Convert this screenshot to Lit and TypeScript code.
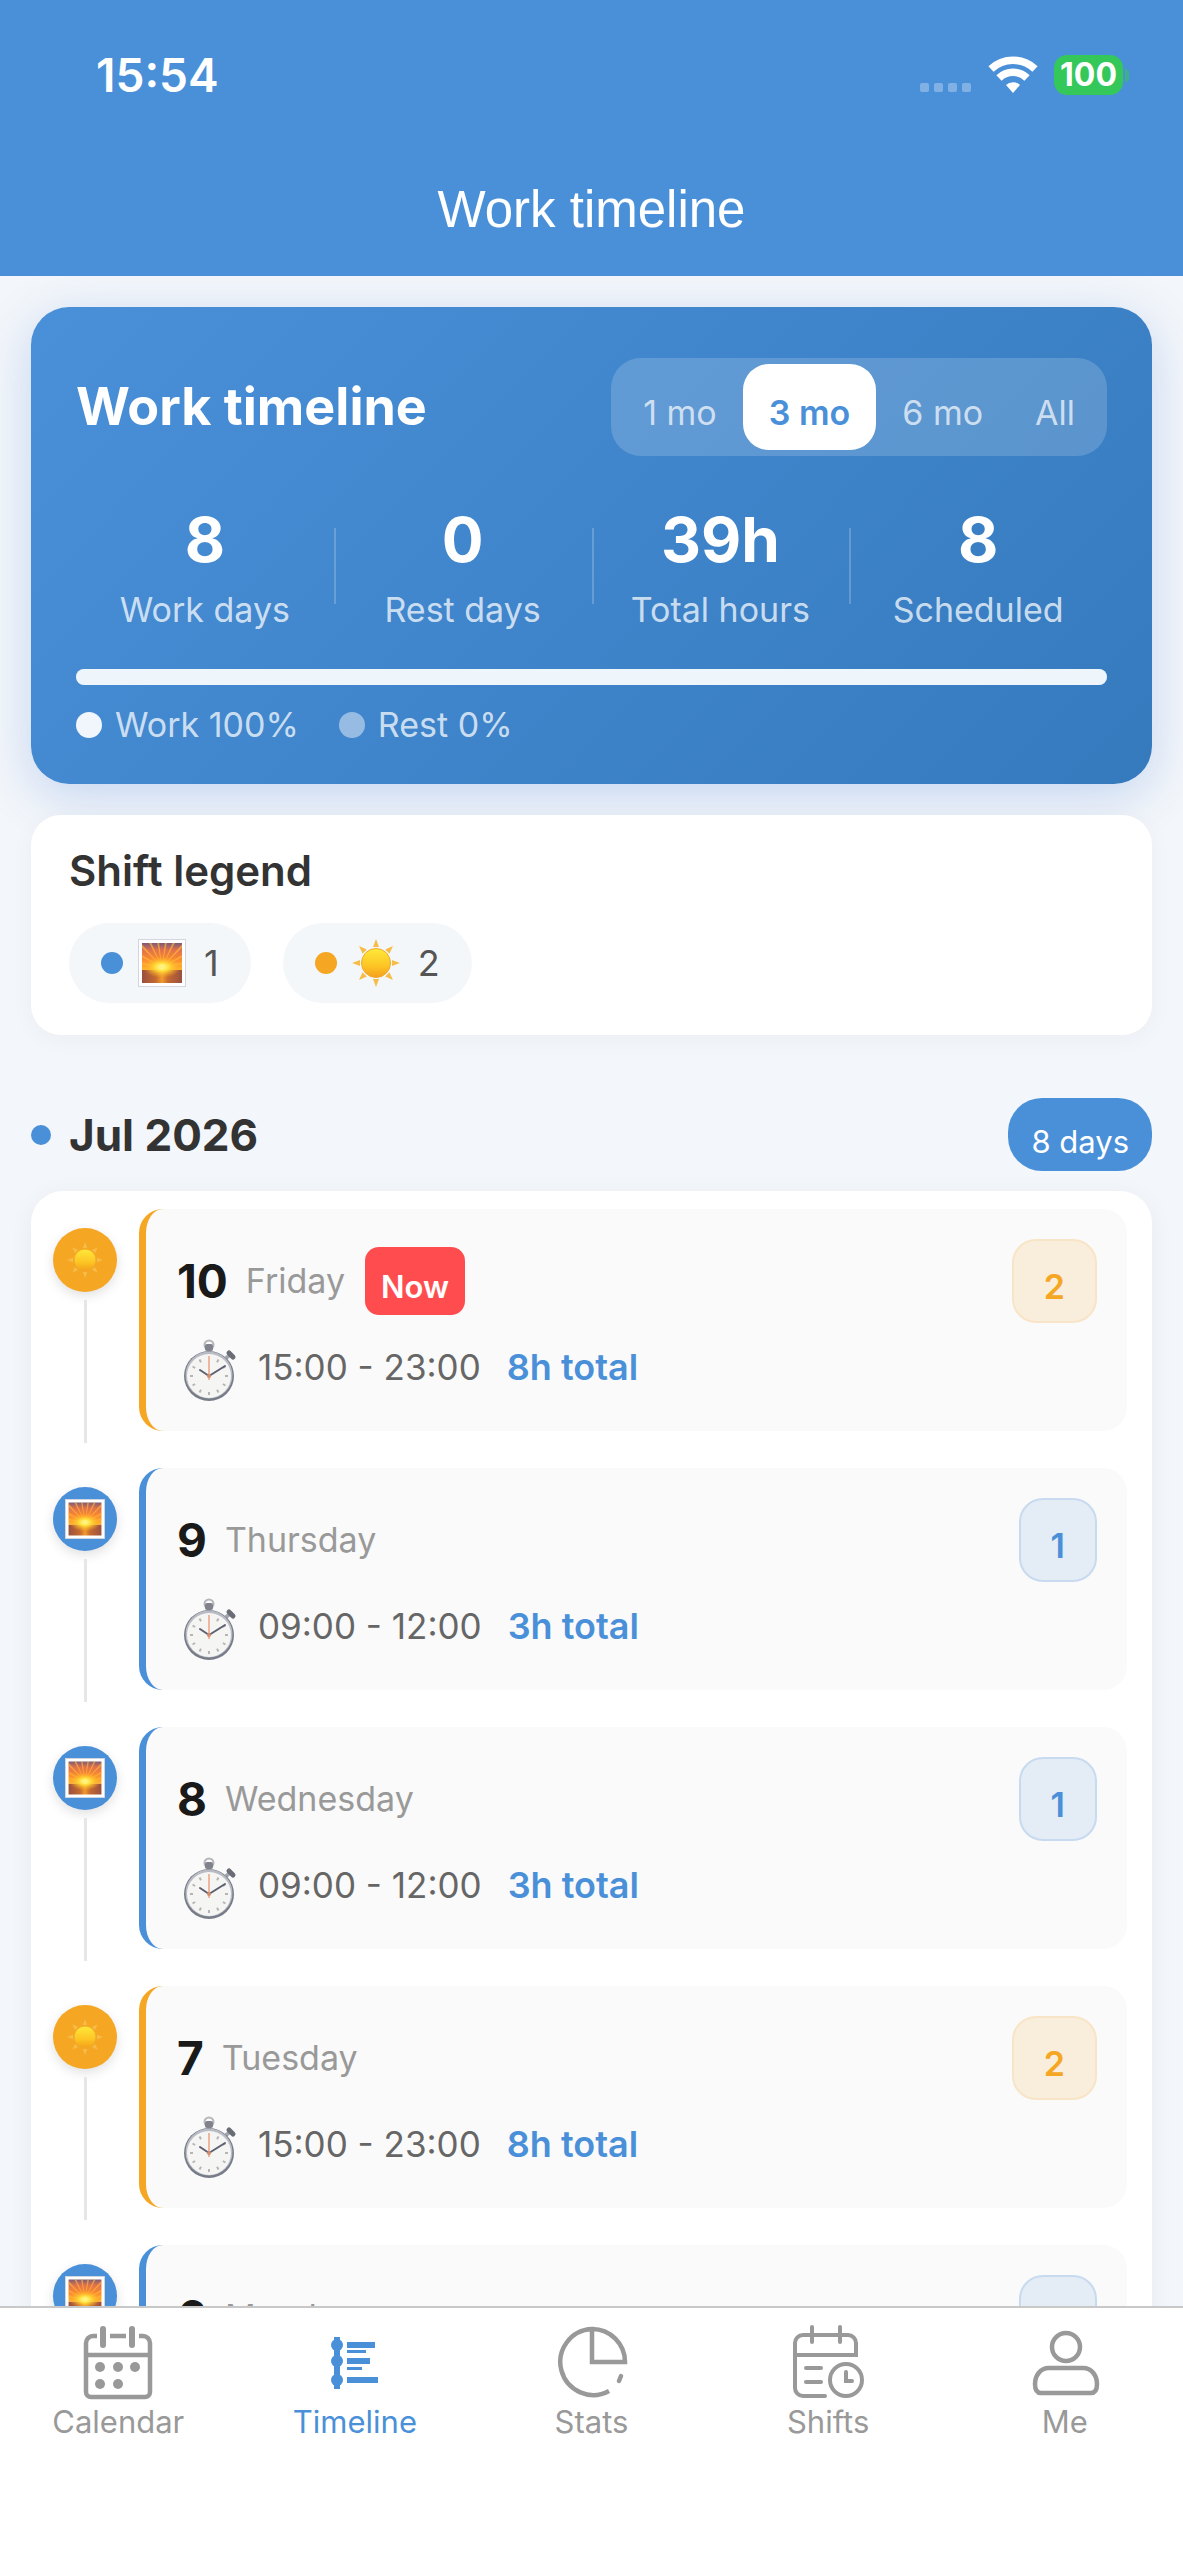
import { LitElement, html, css, svg } from 'lit';
import { customElement, property, state } from 'lit/decorators.js';
import { classMap } from 'lit/directives/class-map.js';

type Shift = 'morning' | 'day';

interface Entry {
  day: number;
  weekday: string;
  shift: Shift;
  hours: string;
  total: string;
  now?: boolean;
}

const SHIFT_NAMES: Record<Shift, string> = { morning: '1', day: '2' };

const ENTRIES: Entry[] = [
  { day: 10, weekday: 'Friday', shift: 'day', hours: '15:00 - 23:00', total: '8h total', now: true },
  { day: 9, weekday: 'Thursday', shift: 'morning', hours: '09:00 - 12:00', total: '3h total' },
  { day: 8, weekday: 'Wednesday', shift: 'morning', hours: '09:00 - 12:00', total: '3h total' },
  { day: 7, weekday: 'Tuesday', shift: 'day', hours: '15:00 - 23:00', total: '8h total' },
  { day: 6, weekday: 'Monday', shift: 'morning', hours: '09:00 - 12:00', total: '3h total' },
];

@customElement('shift-icon')
export class ShiftIcon extends LitElement {
  static override styles = css`
    :host {
      display: block;
      width: 48px;
      height: 48px;
    }

    svg {
      display: block;
      width: 100%;
      height: 100%;
    }
  `;

  @property() shift: Shift = 'day';

  private renderSunrise() {
    const rays = [-80, -62, -44, -26, -9, 9, 26, 44, 62, 80];
    return html`
      <svg viewBox="0 0 48 48" aria-hidden="true">
        <defs>
          <linearGradient id="sky" x1="0" y1="0" x2="0" y2="1">
            <stop offset="0" stop-color="#7a5a78"></stop>
            <stop offset="0.25" stop-color="#e0704c"></stop>
            <stop offset="0.6" stop-color="#fb8a30"></stop>
            <stop offset="1" stop-color="#ffb52b"></stop>
          </linearGradient>
          <linearGradient id="sea" x1="0" y1="0" x2="1" y2="0">
            <stop offset="0" stop-color="#9a5040"></stop>
            <stop offset="0.35" stop-color="#c46a30"></stop>
            <stop offset="0.5" stop-color="#f39a2c"></stop>
            <stop offset="0.65" stop-color="#c46a30"></stop>
            <stop offset="1" stop-color="#9a5040"></stop>
          </linearGradient>
          <radialGradient id="glow">
            <stop offset="0" stop-color="#fffbb0"></stop>
            <stop offset="0.35" stop-color="#ffe03c"></stop>
            <stop offset="1" stop-color="#ffa51e" stop-opacity="0"></stop>
          </radialGradient>
          <clipPath id="frame"><rect x="4" y="4" width="40" height="40"></rect></clipPath>
        </defs>
        <rect x="0.5" y="0.5" width="47" height="47" fill="#fff" stroke="#d3d6de"></rect>
        <g clip-path="url(#frame)">
          <rect x="4" y="4" width="40" height="27" fill="url(#sky)"></rect>
          ${rays.map((angle) => svg`
            <path d="M24 28 L22.6 -8 L25.4 -8 Z" fill="#ffc43a" opacity="0.6" transform="rotate(${angle} 24 28)"></path>
          `)}
          <rect x="4" y="31" width="40" height="13" fill="url(#sea)"></rect>
          <ellipse cx="24" cy="28" rx="19" ry="11" fill="url(#glow)"></ellipse>
          <circle cx="24" cy="28" r="3" fill="#fff27a"></circle>
        </g>
      </svg>
    `;
  }

  private renderSun() {
    const rays = [0, 45, 90, 135, 180, 225, 270, 315];
    return html`
      <svg viewBox="0 0 48 48" aria-hidden="true">
        <defs>
          <linearGradient id="disc" x1="0" y1="0" x2="0" y2="1">
            <stop offset="0" stop-color="#ffe93a"></stop>
            <stop offset="0.6" stop-color="#fdc524"></stop>
            <stop offset="1" stop-color="#f3a01c"></stop>
          </linearGradient>
        </defs>
        ${rays.map((angle) => svg`
          <path d="M24 0 L27 8 L21 8 Z" fill="#f6bc48" transform="rotate(${angle} 24 24)"></path>
        `)}
        <circle cx="24" cy="24" r="14.5" fill="url(#disc)" stroke="#f0a92c"></circle>
      </svg>
    `;
  }

  override render() {
    return this.shift === 'morning' ? this.renderSunrise() : this.renderSun();
  }
}

@customElement('timeline-entry')
export class TimelineEntry extends LitElement {
  static override styles = css`
    :host {
      display: grid;
      grid-template-columns: 64px 1fr;
      gap: 22px;
      font-size: 34px;
      line-height: 48px;
      --accent: #f5a623;
      --badge: #f9eedc;
      --badge-line: #f8e4c6;
    }

    :host([shift='morning']) {
      --accent: #4a90d9;
      --badge: #e4ecf6;
      --badge-line: #c8daef;
    }

    .rail {
      display: flex;
      flex-direction: column;
      align-items: center;
      gap: 8px;
      padding-top: 19px;
      margin-bottom: -12px;
    }

    .node {
      display: flex;
      align-items: center;
      justify-content: center;
      width: 64px;
      height: 64px;
      border-radius: 50%;
      background: var(--accent);
      box-shadow: 0 4px 12px rgba(0, 0, 0, 0.12);
    }

    .node shift-icon {
      width: 40px;
      height: 40px;
    }

    :host([shift='day']) .node shift-icon {
      width: 36px;
      height: 36px;
    }

    .line {
      flex: 1;
      width: 3px;
      background: #e6e6e6;
    }

    .card {
      display: flex;
      flex-direction: column;
      gap: 20px;
      padding: 30px 30px 40px 31px;
      border-left: 7px solid var(--accent);
      border-radius: 24px;
      background: #fafafa;
    }

    .row {
      display: flex;
      align-items: center;
    }

    .day {
      font-size: 46px;
      font-weight: 700;
      color: #1a1a1a;
    }

    .weekday {
      margin-left: 18px;
      color: #999;
    }

    .now {
      margin-left: 20px;
      padding: 16px 16px 4px;
      border-radius: 14px;
      background: #ff4d4f;
      color: #fff;
      font-size: 31px;
      font-weight: 600;
    }

    .badge {
      margin-left: auto;
      padding: 22px 30px 10px;
      border: 2px solid var(--badge-line);
      border-radius: 24px;
      background: var(--badge);
      color: var(--accent);
      font-weight: 600;
    }

    .stopwatch {
      width: 56px;
      height: 64px;
      margin: -4px 0 -12px 5px;
    }

    .hours {
      margin-left: 20px;
      color: #666;
      font-size: 35px;
    }

    .total {
      margin-left: 26px;
      color: #4a90d9;
      font-size: 36px;
      font-weight: 600;
    }
  `;

  @property({ attribute: false }) entry!: Entry;
  @property({ reflect: true }) shift: Shift = 'day';

  private renderStopwatch() {
    const ticks = [30, 60, 90, 120, 150, 180, 210, 240, 270, 300, 330];
    return html`
      <svg class="stopwatch" viewBox="0 0 56 64" aria-hidden="true">
        <circle cx="27" cy="6" r="4.5" fill="none" stroke="#b4b6bb" stroke-width="2"></circle>
        <rect x="23" y="5" width="8" height="7" rx="2" fill="#80838b"></rect>
        <path d="M44 19l4 -3" stroke="#a3a6ad" stroke-width="4"></path>
        <path d="M47 14l4 4" stroke="#6a6d76" stroke-width="5" stroke-linecap="round"></path>
        <circle cx="27" cy="37" r="25" fill="#777c88"></circle>
        <circle cx="27" cy="36" r="23.5" fill="#b9bcc4"></circle>
        <circle cx="27" cy="37" r="22" fill="#f5f5f4"></circle>
        ${ticks.map((angle) => svg`
          <path d="M27 18v3" stroke="#b5b5b5" stroke-width="2" transform="rotate(${angle} 27 37)"></path>
        `)}
        <path d="M27 17v24" stroke="#eeb8a0" stroke-width="2"></path>
        <path d="M27 37l-9 -6M27 37l16 -10" stroke="#5c6070" stroke-width="2" stroke-linecap="round"></path>
        <circle cx="27" cy="37" r="2" fill="#d68d6c"></circle>
      </svg>
    `;
  }

  override render() {
    const { day, weekday, shift, hours, total, now } = this.entry;
    return html`
      <div class="rail">
        <div class="node"><shift-icon .shift=${shift}></shift-icon></div>
        <div class="line"></div>
      </div>
      <div class="card">
        <div class="row">
          <span class="day">${day}</span>
          <span class="weekday">${weekday}</span>
          ${now ? html`<span class="now">Now</span>` : ''}
          <span class="badge">${SHIFT_NAMES[shift]}</span>
        </div>
        <div class="row">
          ${this.renderStopwatch()}
          <span class="hours">${hours}</span>
          <span class="total">${total}</span>
        </div>
      </div>
    `;
  }
}

@customElement('app-root')
export class AppRoot extends LitElement {
  static override styles = css`
    :host {
      display: flex;
      flex-direction: column;
      height: 100vh;
      overflow: hidden;
      background: #f3f6fa;
      color: #333;
      font-family: Inter, 'Liberation Sans', sans-serif;
      font-size: 34px;
      line-height: 48px;
    }

    h1, h2, h3 {
      margin: 0;
    }

    button {
      border: 0;
      background: none;
      font: inherit;
      cursor: pointer;
    }

    .header {
      flex: none;
      background: #4a90d9;
      color: #fff;
    }

    .status {
      display: flex;
      align-items: center;
      justify-content: space-between;
      height: 150px;
      padding: 0 54px 0 96px;
    }

    .clock {
      font-size: 46px;
      font-weight: 600;
    }

    .indicators {
      display: flex;
      align-items: center;
      gap: 16px;
    }

    .signal {
      width: 52px;
      height: 36px;
    }

    .wifi {
      width: 50px;
      height: 38px;
    }

    .battery {
      display: flex;
      align-items: center;
      gap: 2px;
    }

    .level {
      padding: 0 6px;
      border-radius: 13px;
      background: #34c759;
      font-size: 32px;
      font-weight: 700;
      line-height: 40px;
    }

    .tip {
      width: 4px;
      height: 13px;
      border-radius: 0 4px 4px 0;
      background: #34c759;
      opacity: 0.6;
    }

    .title {
      height: 126px;
      font: 400 51px/120px 'Liberation Sans', Arial, sans-serif;
      text-align: center;
    }

    .content {
      flex: 1;
      min-height: 0;
      overflow: hidden;
      padding: 31px 31px 0;
    }

    .hero {
      padding: 51px 45px 35px;
      border-radius: 38px;
      background: linear-gradient(135deg, #4a90d9, #357abd);
      box-shadow: 0 12px 48px rgba(74, 130, 220, 0.28);
      color: #fff;
    }

    .hero-head {
      display: flex;
      align-items: center;
      justify-content: space-between;
    }

    .hero-head h2 {
      font-size: 52px;
      font-weight: 700;
    }

    .ranges {
      display: flex;
      padding: 6px;
      border-radius: 30px;
      background: rgba(255, 255, 255, 0.17);
    }

    .ranges button {
      padding: 25px 26px 13px;
      border-radius: 26px;
      color: rgba(255, 255, 255, 0.7);
      font-size: 34px;
    }

    .ranges button.active {
      background: #fff;
      color: #4a90d9;
      font-weight: 600;
    }

    .stats {
      display: grid;
      grid-template-columns: repeat(4, 1fr);
      margin-top: 48px;
    }

    .stat {
      display: flex;
      flex-direction: column;
      align-items: center;
      gap: 10px;
      position: relative;
    }

    .stat + .stat::before {
      content: '';
      position: absolute;
      left: 0;
      top: 24px;
      width: 2px;
      height: 76px;
      background: rgba(255, 255, 255, 0.2);
    }

    .stat strong {
      font-size: 62px;
      font-weight: 700;
      line-height: 72px;
    }

    .stat span, .shares {
      color: rgba(255, 255, 255, 0.74);
    }

    .bar {
      height: 16px;
      margin-top: 35px;
      border-radius: 8px;
      background: rgba(255, 255, 255, 0.3);
    }

    .fill {
      height: 100%;
      border-radius: 8px;
      background: #eef5fb;
    }

    .shares {
      display: flex;
      gap: 40px;
      margin-top: 16px;
    }

    .share {
      display: flex;
      align-items: center;
      gap: 13px;
    }

    .dot {
      width: 26px;
      height: 26px;
      border-radius: 50%;
      background: #f0f6fc;
    }

    .dot.rest {
      background: rgba(255, 255, 255, 0.45);
    }

    .legend {
      margin-top: 31px;
      padding: 32px 38px;
      border-radius: 30px;
      background: #fff;
      box-shadow: 0 4px 24px rgba(0, 0, 0, 0.04);
    }

    .legend h2 {
      font-size: 42px;
      font-weight: 600;
    }

    .chips {
      display: flex;
      gap: 32px;
      margin-top: 28px;
    }

    .chip {
      display: flex;
      align-items: center;
      padding: 16px 32px;
      border-radius: 40px;
      background: #f4f7fa;
      color: #555;
      font-size: 36px;
    }

    .chip .dot {
      width: 22px;
      height: 22px;
      margin-right: 15px;
      background: #4a90d9;
    }

    .chip .dot.day {
      background: #f5a623;
    }

    .chip shift-icon {
      margin-right: 18px;
    }

    .month {
      display: flex;
      align-items: center;
      gap: 18px;
      margin-top: 63px;
    }

    .month .dot {
      width: 20px;
      height: 20px;
      background: #4a90d9;
    }

    .month h2 {
      font-size: 44px;
      font-weight: 700;
    }

    .count {
      margin-left: auto;
      padding: 20px 23px 5px;
      border-radius: 34px;
      background: #4a90d9;
      color: #fff;
      font-size: 31px;
    }

    .entries {
      display: flex;
      flex-direction: column;
      gap: 37px;
      margin-top: 20px;
      padding: 18px 25px 18px 22px;
      border-radius: 32px;
      background: #fff;
      box-shadow: 0 4px 24px rgba(20, 20, 80, 0.05);
    }

    .tabs {
      flex: none;
      display: grid;
      grid-template-columns: repeat(5, 1fr);
      height: 252px;
      border-top: 2px solid #c8c8c8;
      background: #fff;
    }

    .tabs a {
      display: flex;
      flex-direction: column;
      align-items: center;
      padding-top: 14px;
      color: #999;
      font-size: 31px;
      line-height: 40px;
      text-decoration: none;
    }

    .tabs a.active {
      color: #4a90d9;
    }

    .tabs svg {
      width: 78px;
      height: 78px;
      margin-bottom: 2px;
    }
  `;

  @state() private range = '3 mo';

  private tabIcon(name: string) {
    switch (name) {
      case 'Calendar':
        return svg`
          <g fill="none" stroke="currentColor" stroke-width="4.5">
            <path d="M18 14h-4a7 7 0 0 0-7 7v49a5 5 0 0 0 5 5h54a5 5 0 0 0 5-5v-49a7 7 0 0 0-7-7h-4M31 14h16M7 33h64"></path>
            <path d="M24 7v16M53 7v16" stroke-width="6" stroke-linecap="round"></path>
          </g>
          <g fill="currentColor">
            <circle cx="21" cy="45" r="5"></circle>
            <circle cx="39" cy="45" r="5"></circle>
            <circle cx="56" cy="45" r="5"></circle>
            <circle cx="21" cy="62" r="5"></circle>
            <circle cx="39" cy="62" r="5"></circle>
          </g>`;
      case 'Timeline':
        return svg`
          <g fill="currentColor">
            <path d="M18 15h6v52h-6z"></path>
            <circle cx="21" cy="23" r="6"></circle>
            <circle cx="21" cy="39" r="6"></circle>
            <circle cx="21" cy="58" r="6"></circle>
            <path d="M31 20h28v6h-28zM31 28h19v3h-19zM31 36h23v6h-23zM31 45h15v3h-15zM31 55h31v6h-31z"></path>
          </g>`;
      case 'Stats':
        return svg`
          <g fill="none" stroke="currentColor" stroke-width="4.5">
            <path d="M57 69A33 33 0 1 1 40 7V40H73A33 33 0 0 0 40 7"></path>
            <path d="M69 54l-2 5" stroke-linecap="round"></path>
          </g>`;
      case 'Shifts':
        return svg`
          <g fill="none" stroke="currentColor" stroke-width="4" stroke-linecap="round">
            <path d="M36 74H14a8 8 0 0 1-8-8V21a8 8 0 0 1 8-8h45a8 8 0 0 1 8 8v12H6M23 5v15M51 5v15M17 46h15M17 60h15"></path>
            <circle cx="57" cy="58" r="16"></circle>
            <path d="M57 50v9h6"></path>
          </g>`;
      default:
        return svg`
          <g fill="none" stroke="currentColor" stroke-width="4.5">
            <circle cx="40" cy="25" r="14"></circle>
            <path d="M23 46h34c9 0 14 8 14 16 0 6-2 9-6 9h-50c-4 0-6-3-6-9 0-8 5-16 14-16z"></path>
          </g>`;
    }
  }

  private renderStatus() {
    return html`
      <div class="status">
        <span class="clock">15:54</span>
        <div class="indicators">
          <svg class="signal" viewBox="0 0 52 36" fill="#fff" opacity="0.3" aria-hidden="true">
            <rect x="0" y="26" width="9" height="9" rx="2"></rect>
            <rect x="14" y="26" width="9" height="9" rx="2"></rect>
            <rect x="28" y="26" width="9" height="9" rx="2"></rect>
            <rect x="42" y="26" width="9" height="9" rx="2"></rect>
          </svg>
          <svg class="wifi" viewBox="0 0 50 38" aria-hidden="true">
            <g fill="none" stroke="#fff" stroke-width="7.5">
              <path d="M3 13a32 32 0 0 1 44 0"></path>
              <path d="M11 22a20 20 0 0 1 28 0"></path>
            </g>
            <path d="M18 29a10 10 0 0 1 14 0l-7 8z" fill="#fff"></path>
          </svg>
          <div class="battery">
            <span class="level">100</span>
            <span class="tip"></span>
          </div>
        </div>
      </div>
    `;
  }

  private renderHero() {
    const ranges = ['1 mo', '3 mo', '6 mo', 'All'];
    const stats = [
      ['8', 'Work days'],
      ['0', 'Rest days'],
      ['39h', 'Total hours'],
      ['8', 'Scheduled'],
    ];
    return html`
      <section class="hero">
        <div class="hero-head">
          <h2>Work timeline</h2>
          <div class="ranges">
            ${ranges.map((range) => html`
              <button
                class=${classMap({ active: range === this.range })}
                @click=${() => { this.range = range; }}
              >${range}</button>
            `)}
          </div>
        </div>
        <div class="stats">
          ${stats.map(([value, label]) => html`
            <div class="stat"><strong>${value}</strong><span>${label}</span></div>
          `)}
        </div>
        <div class="bar"><div class="fill" style="width: 100%"></div></div>
        <div class="shares">
          <div class="share"><i class="dot"></i>Work 100%</div>
          <div class="share"><i class="dot rest"></i>Rest 0%</div>
        </div>
      </section>
    `;
  }

  override render() {
    const shifts: Shift[] = ['morning', 'day'];
    const tabs = ['Calendar', 'Timeline', 'Stats', 'Shifts', 'Me'];
    return html`
      <header class="header">
        ${this.renderStatus()}
        <h1 class="title">Work timeline</h1>
      </header>
      <main class="content">
        ${this.renderHero()}
        <section class="legend">
          <h2>Shift legend</h2>
          <div class="chips">
            ${shifts.map((shift) => html`
              <div class="chip">
                <i class="dot ${shift}"></i>
                <shift-icon .shift=${shift}></shift-icon>
                ${SHIFT_NAMES[shift]}
              </div>
            `)}
          </div>
        </section>
        <div class="month">
          <i class="dot"></i>
          <h2>Jul 2026</h2>
          <span class="count">8 days</span>
        </div>
        <section class="entries">
          ${ENTRIES.map((entry) => html`
            <timeline-entry .entry=${entry} .shift=${entry.shift}></timeline-entry>
          `)}
        </section>
      </main>
      <nav class="tabs">
        ${tabs.map((tab) => html`
          <a href="#${tab.toLowerCase()}" class=${classMap({ active: tab === 'Timeline' })}>
            <svg viewBox="0 0 78 78" aria-hidden="true">${this.tabIcon(tab)}</svg>
            ${tab}
          </a>
        `)}
      </nav>
    `;
  }
}
